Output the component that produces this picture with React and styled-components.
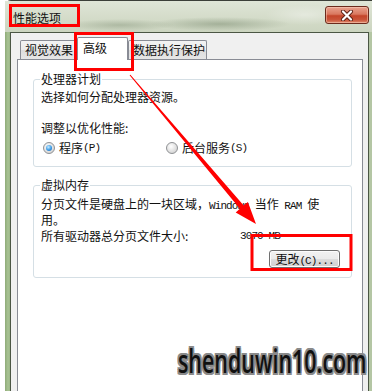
import React from "react";
import styled, { createGlobalStyle } from "styled-components";

const GlobalStyle = createGlobalStyle`
  html, body { margin: 0; padding: 0; background: #fff; }
  body { font-family: "Noto Sans CJK SC", "Noto Sans", sans-serif; }
  * { box-sizing: border-box; }
`;

const Window = styled.div`
  position: relative;
  width: 372px;
  height: 391px;
  overflow: hidden;
  background: #fff;
  padding-left: 5px;
  display: flex;
`;

const Frame = styled.div`
  flex: 1;
  display: flex;
  flex-direction: column;
  border-top: 1px solid #3b3f38;
  border-top-left-radius: 6px;
  background: linear-gradient(90deg, #8eab78 0px, #a8c293 3px, #9cb887 5px, #b4c6a4 100%);
`;

const TitleBar = styled.div`
  height: 31px;
  display: flex;
  align-items: flex-start;
  padding-left: 8px;
  background:
    radial-gradient(ellipse 70px 7px at 215px 23px, rgba(110, 128, 100, 0.45), rgba(110, 128, 100, 0) 100%),
    radial-gradient(ellipse 55px 6px at 115px 24px, rgba(110, 128, 100, 0.35), rgba(110, 128, 100, 0) 100%),
    radial-gradient(ellipse 40px 10px at 300px 14px, rgba(255, 255, 255, 0.35), rgba(255, 255, 255, 0) 100%),
    linear-gradient(180deg, #dfe5d7 0%, #d3dbc8 60%, #ccd5c0 100%);
`;

const TitleText = styled.div`
  margin-top: 9px;
  font-size: 12px;
  line-height: 16px;
  color: #111;
`;

const CloseBtn = styled.div`
  margin-left: auto;
  margin-right: 3px;
  margin-top: 5px;
  width: 44px;
  height: 18px;
  border: 1px solid #6b2a1c;
  border-radius: 3px;
  background: linear-gradient(180deg, #e9a28e 0%, #d9785f 45%, #c4452a 55%, #c9553a 80%, #e08a6c 100%);
  box-shadow: inset 0 0 0 1px rgba(255, 220, 200, 0.45);
  display: flex;
  align-items: center;
  justify-content: center;
`;

const Client = styled.div`
  flex: 1;
  margin: 0 3px 0 5px;
  background: #f0f0f0;
  border: 1px solid #4b5644;
  border-bottom: none;
  padding: 4px 5px 0 6px;
  display: flex;
  flex-direction: column;
`;

const TabRow = styled.div`
  height: 22px;
  display: flex;
  align-items: flex-end;
  padding-left: 3px;
`;

const Tab = styled.div`
  position: relative;
  z-index: ${(p) => (p.$sel ? 2 : 1)};
  width: ${(p) => p.$w}px;
  height: ${(p) => (p.$sel ? 23 : 19)}px;
  margin-bottom: ${(p) => (p.$sel ? -1 : 0)}px;
  padding-left: ${(p) => (p.$sel ? 5 : 4)}px;
  border: 1px solid #898c95;
  border-bottom: none;
  border-radius: 2px 2px 0 0;
  background: ${(p) => (p.$sel ? "#fff" : "linear-gradient(180deg, #f3f3f3 0%, #ebebeb 50%, #dddddd 51%, #e6e6e6 100%)")};
  font-size: 12px;
  line-height: ${(p) => (p.$sel ? 20 : 18)}px;
  color: #111;
  white-space: nowrap;
`;

const Panel = styled.div`
  flex: 1;
  background: #fff;
  border: 1px solid #898c95;
  border-bottom: none;
  display: flex;
  flex-direction: column;
`;

const Group = styled.fieldset`
  margin: ${(p) => p.$mt}px 10px 0 15px;
  padding: 0 11px ${(p) => p.$pb}px 7px;
  border: 1px solid #d5dfe5;
  border-radius: 3px;
  min-width: 0;
`;

const Legend = styled.legend`
  margin-left: -1px;
  padding: 0 1px;
  font-size: 12px;
  line-height: 14px;
  color: #111;
`;

const Line = styled.div`
  margin-top: ${(p) => p.$mt || 0}px;
  font-size: 12px;
  line-height: ${(p) => p.$lh || 14}px;
  color: #111;
  white-space: nowrap;
`;

const Latin = styled.span`
  font-family: "Liberation Mono", monospace;
  font-size: 11px;
  letter-spacing: -0.9px;
`;

const RadioRow = styled.div`
  margin-top: 6px;
  display: flex;
  height: 14px;
  align-items: center;
`;

const RadioItem = styled.div`
  width: ${(p) => (p.$w ? `${p.$w}px` : "auto")};
  display: flex;
  align-items: center;
  font-size: 12px;
  line-height: 14px;
  color: #111;
`;

const RadioCircle = styled.span`
  margin-left: 2px;
  margin-right: 4px;
  width: 12px;
  height: 12px;
  border-radius: 50%;
  border: 1px solid #8f9194;
  background: radial-gradient(circle at 40% 35%, #ffffff 0%, #e6e6e6 45%, #c9c9c9 100%);
  display: inline-flex;
  align-items: center;
  justify-content: center;
  &::after {
    content: "";
    display: ${(p) => (p.$on ? "block" : "none")};
    width: 6px;
    height: 6px;
    border-radius: 50%;
    background: radial-gradient(circle at 40% 35%, #c8ecff 0%, #3a9ae6 55%, #1a5ea8 100%);
  }
`;

const SizeRow = styled.div`
  margin-top: 3px;
  display: grid;
  grid-template-columns: 199px auto;
  font-size: 12px;
  line-height: 14px;
  color: #111;
`;

const ButtonRow = styled.div`
  margin-top: 7px;
  display: flex;
  justify-content: flex-end;
`;

const Button = styled.div`
  width: 71px;
  height: 18px;
  border: 1px solid #707070;
  border-radius: 3px;
  background: linear-gradient(180deg, #f2f2f2 0%, #ebebeb 49%, #dddddd 50%, #cfcfcf 100%);
  box-shadow: inset 0 0 0 1px #fcfcfc;
  font-size: 12px;
  line-height: 16px;
  text-align: center;
  color: #111;
  white-space: nowrap;
`;

const Overlay = styled.svg`
  position: absolute;
  left: 0;
  top: 0;
  pointer-events: none;
  z-index: 5;
`;

const Watermark = styled.div`
  position: absolute;
  right: 5px;
  top: 345px;
  z-index: 6;
  font-family: "Open Sans", "Noto Sans", sans-serif;
  font-size: 32px;
  font-weight: 600;
  line-height: 32px;
  color: #111;
  transform: scaleX(0.67);
  transform-origin: right top;
  white-space: nowrap;
  text-shadow:
    2px 0 0 #8a8a8a, -2px 0 0 #8a8a8a, 0 2px 0 #8a8a8a, 0 -2px 0 #8a8a8a,
    2px 2px 0 #8a8a8a, -2px -2px 0 #8a8a8a, 2px -2px 0 #8a8a8a, -2px 2px 0 #8a8a8a;
`;

function CloseGlyph() {
  return (
    <svg width="14" height="11" viewBox="0 0 14 11">
      <path d="M3 1.5 L11 9.5 M11 1.5 L3 9.5" stroke="#5a1e12" strokeWidth="4" strokeLinecap="round" />
      <path d="M3 1.5 L11 9.5 M11 1.5 L3 9.5" stroke="#ffffff" strokeWidth="2.2" strokeLinecap="round" />
    </svg>
  );
}

export default function App() {
  return (
    <>
      <GlobalStyle />
      <Window>
        <Frame>
          <TitleBar>
            <TitleText>性能选项</TitleText>
            <CloseBtn>
              <CloseGlyph />
            </CloseBtn>
          </TitleBar>
          <Client>
            <TabRow>
              <Tab $w={57}>视觉效果</Tab>
              <Tab $w={51} $sel>高级</Tab>
              <Tab $w={79}>数据执行保护</Tab>
            </TabRow>
            <Panel>
              <Group $mt={12} $pb={11}>
                <Legend>处理器计划</Legend>
                <Line $mt={4}>选择如何分配处理器资源。</Line>
                <Line $mt={17}>调整以优化性能:</Line>
                <RadioRow>
                  <RadioItem $w={123}>
                    <RadioCircle $on />
                    程序<Latin>(P)</Latin>
                  </RadioItem>
                  <RadioItem>
                    <RadioCircle />
                    后台服务<Latin>(S)</Latin>
                  </RadioItem>
                </RadioRow>
              </Group>
              <Group $mt={11} $pb={9}>
                <Legend>虚拟内存</Legend>
                <Line $mt={5} $lh={13}>
                  分页文件是硬盘上的一块区域，<Latin>Windows </Latin>当作<Latin> RAM </Latin>使
                  <br />
                  用。
                </Line>
                <SizeRow>
                  <span>所有驱动器总分页文件大小:</span>
                  <Latin>3070 MB</Latin>
                </SizeRow>
                <ButtonRow>
                  <Button>
                    更改<Latin>(C)...</Latin>
                  </Button>
                </ButtonRow>
              </Group>
            </Panel>
          </Client>
        </Frame>
        <Overlay width="372" height="391" viewBox="0 0 372 391">
          <g fill="none" stroke="#ff0000" strokeWidth="3">
            <rect x="10.5" y="5.5" width="68" height="20" />
            <rect x="75.5" y="33.5" width="57" height="36" />
            <rect x="252" y="235.5" width="99" height="34" />
          </g>
          <polygon
            fill="#ff0000"
            points="130.4,74.7 243.7,205.6 247.9,202.0 256,224 235.7,212.4 239.9,208.8 129.6,75.3"
          />
        </Overlay>
        <Watermark>shenduwin10.com</Watermark>
      </Window>
    </>
  );
}
